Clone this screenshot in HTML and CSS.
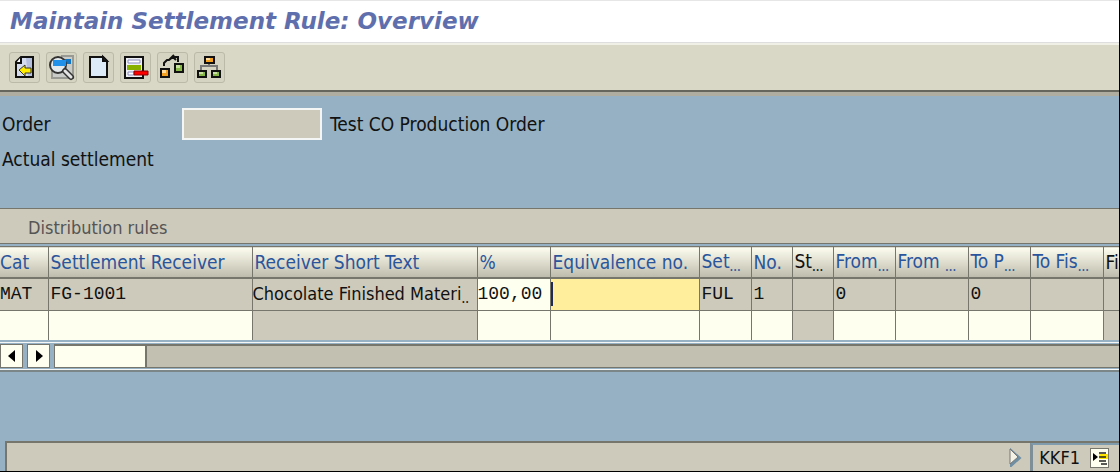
FILE: index.html
```
<!DOCTYPE html>
<html lang="en">

<head>
    <meta charset="utf-8">
    <title>Maintain Settlement Rule: Overview</title>
    <meta name="viewport" content="width=device-width, initial-scale=1.0">
    <link rel="stylesheet" href="styles.css">
</head>

<body>
    <header class="title-bar">
        <h1>Maintain Settlement Rule: Overview</h1>
    </header>

    <div class="toolbar">
        <button type="button" aria-label="Back">
            <svg viewBox="0 0 29 30" width="29" height="30">
                <path d="M11 4h12v20H6V9z" fill="#d5dcee" stroke="#111" stroke-width="2"/>
                <path d="M16 5h6v18h-4z" fill="#b4c0de"/>
                <path d="M6 10h5V4" fill="#fff" stroke="#111" stroke-width="2"/>
                <path d="M9 17l6-5v3h6v5h-6v3z" fill="#ffee00" stroke="#333" stroke-width="1"/>
            </svg>
        </button>
        <button type="button" aria-label="Details">
            <svg viewBox="0 0 29 30" width="29" height="30">
                <path d="M14 3h12v22H5v-8" fill="#c9ccc8" stroke="#9a9a94" stroke-width="2"/>
                <path d="M17 6h7v5h-7z" fill="#1074c4"/>
                <circle cx="11" cy="12" r="8" fill="#e4eaec" stroke="#333" stroke-width="2"/>
                <path d="M6 7h13v6H6z" fill="#2090e8"/>
                <path d="M18 18l6 6" stroke="#333" stroke-width="6" stroke-linecap="round"/>
                <path d="M18 18l6 6" stroke="#e4e4e4" stroke-width="3" stroke-linecap="round"/>
            </svg>
        </button>
        <button type="button" aria-label="Create">
            <svg viewBox="0 0 29 30" width="29" height="30">
                <path d="M6 4h13l4 4v16H6z" fill="#dcebf7" stroke="#111" stroke-width="2"/>
                <path d="M19 4v4h4z" fill="#777" stroke="#111" stroke-width="2"/>
            </svg>
        </button>
        <button type="button" aria-label="Delete row">
            <svg viewBox="0 0 29 30" width="29" height="30">
                <path d="M4 4h18v21H4z" fill="#edf0f4" stroke="#111" stroke-width="2"/>
                <path d="M7 7h12v3H7zM7 19h6v3H7z" fill="#fff" stroke="#8c8cc0"/>
                <path d="M6 12h14v5H6z" fill="#88b000"/>
                <path d="M13 18h14v4H13z" fill="#f00" stroke="#800" stroke-width="1"/>
            </svg>
        </button>
        <button type="button" aria-label="Replace assignment">
            <svg viewBox="0 0 29 30" width="29" height="30">
                <path d="M6 13v-3l3-3h2l4-3h5v5M16 2l-5 5M15 4l3 3" fill="none" stroke="#111" stroke-width="2"/>
                <path d="M3 16h8v8H3z" fill="#f4a020" stroke="#111" stroke-width="2"/>
                <path d="M4 17h4v3H4z" fill="#ffdca0"/>
                <path d="M17 11h8v8h-8z" fill="#88b848" stroke="#111" stroke-width="2"/>
                <path d="M18 12h4v3h-4z" fill="#c8e0a0"/>
            </svg>
        </button>
        <button type="button" aria-label="Hierarchy">
            <svg viewBox="0 0 29 30" width="29" height="30">
                <path d="M14 9v4M6 18v-5h16v5" fill="none" stroke="#777" stroke-width="2"/>
                <path d="M10 4h9v6h-9z" fill="#f4a020" stroke="#111" stroke-width="2"/>
                <path d="M11 5h4v2h-4z" fill="#ffdca0"/>
                <path d="M3 18h8v6H3zM17 18h8v6h-8z" fill="#88b848" stroke="#111" stroke-width="2"/>
                <path d="M4 19h4v2H4zM18 19h4v2h-4z" fill="#c8e0a0"/>
            </svg>
        </button>
    </div>

    <main>
        <div class="order">
            <label for="order">Order</label>
            <input type="text" id="order" readonly>
            <span>Test CO Production Order</span>
        </div>
        <p class="settlement">Actual settlement</p>

        <section class="rules">
            <h2>Distribution rules</h2>
            <table>
                <colgroup>
                    <col class="w-cat">
                    <col class="w-receiver">
                    <col class="w-text">
                    <col class="w-percent">
                    <col class="w-equiv">
                    <col class="w-set">
                    <col class="w-no">
                    <col class="w-no">
                    <col class="w-period">
                    <col class="w-year">
                    <col class="w-period">
                    <col class="w-year">
                    <col>
                </colgroup>
                <thead>
                    <tr>
                        <th>Cat</th>
                        <th>Settlement Receiver</th>
                        <th>Receiver Short Text</th>
                        <th>%</th>
                        <th>Equivalence no.</th>
                        <th>Set<span class="dots">...</span></th>
                        <th>No.</th>
                        <th class="fixed">St<span class="dots">...</span></th>
                        <th>From<span class="dots">...</span></th>
                        <th>From <span class="dots">...</span></th>
                        <th>To P<span class="dots">...</span></th>
                        <th>To Fis<span class="dots">...</span></th>
                        <th class="fixed">Fi</th>
                    </tr>
                </thead>
                <tbody>
                    <tr class="filled">
                        <td>MAT</td>
                        <td>FG-1001</td>
                        <td class="text">Chocolate Finished Materi<span class="dots">..</span></td>
                        <td class="open"><input type="text" value="100,00" aria-label="Percent"></td>
                        <td class="active"><input type="text" aria-label="Equivalence no."></td>
                        <td>FUL</td>
                        <td>1</td>
                        <td></td>
                        <td>0</td>
                        <td></td>
                        <td>0</td>
                        <td></td>
                        <td></td>
                    </tr>
                    <tr class="empty">
                        <td class="open"><input type="text" aria-label="Cat"></td>
                        <td class="open"><input type="text" aria-label="Settlement Receiver"></td>
                        <td></td>
                        <td class="open"><input type="text" aria-label="Percent"></td>
                        <td class="open"><input type="text" aria-label="Equivalence no."></td>
                        <td class="open"><input type="text" aria-label="Settlement type"></td>
                        <td class="open"><input type="text" aria-label="No."></td>
                        <td></td>
                        <td class="open"><input type="text" aria-label="From period"></td>
                        <td class="open"><input type="text" aria-label="From fiscal year"></td>
                        <td class="open"><input type="text" aria-label="To period"></td>
                        <td class="open"><input type="text" aria-label="To fiscal year"></td>
                        <td></td>
                    </tr>
                </tbody>
            </table>
            <div class="scroll">
                <button type="button" aria-label="Scroll left">
                    <svg viewBox="0 0 8 12" width="8" height="12"><path d="M7 0v12L0 6z"/></svg>
                </button>
                <button type="button" aria-label="Scroll right">
                    <svg viewBox="0 0 8 12" width="8" height="12"><path d="M1 0v12l7-6z"/></svg>
                </button>
                <div class="track"><div class="thumb"></div></div>
            </div>
        </section>
    </main>

    <footer class="status">
        <div class="message">
            <svg viewBox="0 0 14 20" width="14" height="20">
                <path d="M3 3l9 8-9 8z" fill="#6f8fa3" stroke="#6f8fa3" stroke-width="2"/>
                <path d="M2 2l8 8-8 7z" fill="#f4f2e4" stroke="#777"/>
            </svg>
        </div>
        <div class="session">
            <span>KKF1</span>
            <button type="button" aria-label="Session details">
                <svg viewBox="0 0 16 18" width="16" height="18">
                    <path d="M1 4l5 4-5 4z"/>
                    <path d="M7 5h9v5H7z" fill="#ffe600"/>
                    <path d="M7 4h7M7 8h7M7 12h7M9 15h6" stroke="#222" stroke-width="1.5"/>
                </svg>
            </button>
        </div>
    </footer>
</body>
</html>
```

FILE: styles.css
```
* {
    box-sizing: border-box;
}
body {
    margin: 0;
    min-height: 100vh;
    display: flex;
    flex-direction: column;
    overflow-x: hidden;
    background-color: #95b1c3;
    border-right: 1px solid #000;
    border-bottom: 1px solid #000;
    color: #111;
    font: 19px/24px "DejaVu Sans Condensed", "Noto Sans", sans-serif;
}
h1, h2, p {
    margin: 0;
    font-weight: normal;
}
button, input {
    margin: 0;
    padding: 0;
    font: inherit;
    color: inherit;
    border-radius: 0;
}
button {
    display: flex;
    align-items: center;
    justify-content: center;
}
svg {
    display: block;
}
.title-bar {
    padding: 7px 10px;
    background-color: #fff;
    border-top: 1px solid #e6e6e6;
    border-bottom: 1px solid #dedede;
}
.title-bar h1 {
    font: italic bold 23px/27px "DejaVu Sans", sans-serif;
    color: #5f6fad;
}
.toolbar {
    display: flex;
    gap: 6px;
    padding: 7px 9px;
    background-color: #d9d8c6;
    border-top: 2px solid #f0f0e6;
    border-bottom: 2px solid #66665c;
}
.toolbar button {
    width: 31px;
    height: 31px;
    background-color: #d5d3c1;
    border: 1px solid #bbb9a8;
    border-radius: 3px;
}
main {
    padding-top: 12px;
    border-top: 4px solid #aeada0;
}
.order {
    display: flex;
    align-items: center;
    padding-left: 2px;
}
.order label {
    width: 180px;
}
.order input {
    width: 140px;
    height: 32px;
    margin-right: 8px;
    background-color: #cdcabb;
    border: 2px solid #f4f6f6;
}
.settlement {
    padding: 7px 2px 37px;
}
.rules h2 {
    padding: 7px 28px 3px;
    font-size: 18px;
    line-height: 24px;
    color: #555;
    background-color: #cdcabb;
    border-top: 1px solid #77766c;
    border-bottom: 1px solid #77766c;
}
.rules {
    border-bottom: 2px solid #7b8688;
}
table {
    width: 100%;
    margin-top: 2px;
    table-layout: fixed;
    border-collapse: collapse;
}
.w-cat { width: 48px; }
.w-receiver { width: 204px; }
.w-text { width: 225px; }
.w-percent { width: 73px; }
.w-equiv { width: 149px; }
.w-set { width: 52px; }
.w-no { width: 41px; }
.w-period { width: 62px; }
.w-year { width: 73px; }
th, td {
    padding: 0 0 0 2px;
    overflow: hidden;
    white-space: nowrap;
    text-align: left;
    font-weight: normal;
    border-right: 1px solid #77766c;
}
th:first-child, td:first-child {
    padding-left: 0;
}
th:last-child, td:last-child {
    border-right: 0;
}
th {
    height: 31px;
    color: #2a559c;
    background: linear-gradient(#fdfdf0, #dddccd 50%, #bdbbac);
    border-top: 1px solid #77766c;
    border-bottom: 2px solid #77766c;
}
th.fixed {
    color: #111;
}
td {
    height: 33px;
    background-color: #cdcabb;
    border-bottom: 1px solid #77766c;
    font-family: "Liberation Mono", monospace;
    font-size: 18px;
}
td.text {
    padding-left: 0;
    font-family: "DejaVu Sans Condensed", "Noto Sans", sans-serif;
}
td.open, td.active {
    padding: 0;
    background-color: #fffff0;
}
td.active {
    background-color: #ffee9c;
}
td input {
    display: block;
    width: 100%;
    height: 24px;
    border: 0;
    background: none;
}
td.active input {
    border-left: 2px solid #222a50;
}
.empty td {
    height: 29px;
    border-bottom: 0;
}
.dots {
    font: 14px/16px "Noto Sans", sans-serif;
    vertical-align: -3px;
}
.scroll {
    display: flex;
    gap: 4px;
    margin-top: 2px;
    height: 28px;
    padding: 1px 0;
    border-top: 1px solid #f4f6f6;
    border-bottom: 1px solid #f4f6f6;
}
.scroll button {
    width: 23px;
    background-color: #fffff0;
    border: 1px solid #77766c;
}
.track {
    flex: 1;
    background-color: #c2c0b1;
    border: 1px solid #77766c;
    border-top-width: 2px;
    border-right: 0;
}
.thumb {
    width: 92px;
    height: 100%;
    background-color: #fffff0;
    border-right: 2px solid #77766c;
}
.status {
    display: flex;
    height: 30px;
    margin-top: auto;
    margin-left: 5px;
    background-color: #cdcabb;
    border-top: 2px solid #77766c;
    border-left: 2px solid #77766c;
}
.message {
    flex: 1;
    display: flex;
    align-items: center;
    justify-content: flex-end;
    padding-right: 8px;
}
.session {
    display: flex;
    align-items: center;
    gap: 10px;
    padding: 0 10px 0 6px;
    font-size: 18px;
    border-top: 2px solid #7f9bae;
    border-left: 3px solid #7f8f98;
}
.session button {
    width: 19px;
    height: 20px;
    background-color: #fffff0;
    border: 1px solid #77766c;
}
```
